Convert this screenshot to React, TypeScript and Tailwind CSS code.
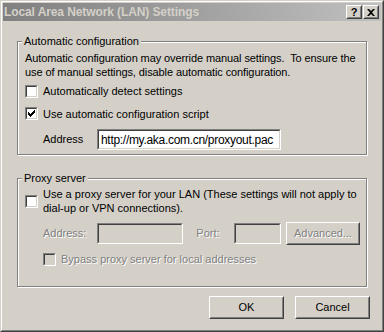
import React from "react";

const font = { fontFamily: '"Liberation Sans", Arial, sans-serif' };

function Checkbox({ checked = false, disabled = false }: { checked?: boolean; disabled?: boolean }) {
  return (
    <div className="w-[13px] h-[13px] shrink-0 border border-t-[#808080] border-l-[#808080] border-b-white border-r-white">
      <div
        className={`w-full h-full border border-t-[#404040] border-l-[#404040] border-b-[#d4d0c8] border-r-[#d4d0c8] ${disabled ? "bg-[#d4d0c8]" : "bg-white"} flex items-center justify-center`}
      >
        {checked && (
          <svg width="7" height="7" viewBox="0 0 7 7">
            <path d="M0 2h1v1h1v1h1v-1h1v-1h1v-1h1v-1h1v3h-1v1h-1v1h-1v1h-1v1h-1v-1h-1v-1h-1z" fill="#000" />
          </svg>
        )}
      </div>
    </div>
  );
}

function Field({ w, value, disabled = false }: { w: string; value?: string; disabled?: boolean }) {
  return (
    <div className={`${w} h-[21px] border border-t-[#808080] border-l-[#808080] border-b-white border-r-white`}>
      <div
        className={`w-full h-full border border-t-[#404040] border-l-[#404040] border-b-[#d4d0c8] border-r-[#d4d0c8] ${disabled ? "bg-[#d4d0c8]" : "bg-white"} flex items-center pl-[2px] text-[12px] tracking-[-0.3px] text-black`}
      >
        {value}
      </div>
    </div>
  );
}

function Button({ label, w, disabled = false }: { label: string; w: string; disabled?: boolean }) {
  return (
    <div className={`${w} h-[23px] border border-t-white border-l-white border-b-[#404040] border-r-[#404040]`}>
      <div className="w-full h-full border border-t-[#d4d0c8] border-l-[#d4d0c8] border-b-[#808080] border-r-[#808080] flex items-center justify-center">
        <span className={disabled ? "text-[#808080] [text-shadow:1px_1px_0_#fff]" : "text-black"}>{label}</span>
      </div>
    </div>
  );
}

function Group({ title, className, children }: { title: string; className: string; children: React.ReactNode }) {
  return (
    <div className={`relative border border-[#808080] shadow-[inset_1px_1px_0_#fff,1px_1px_0_#fff] ${className}`}>
      <span className="absolute left-[4px] top-[-8px] bg-[#d4d0c8] px-[2px] leading-[14px]">{title}</span>
      {children}
    </div>
  );
}

export default function App() {
  return (
    <div style={font} className="w-[384px] h-[332px] bg-[#d4d0c8] text-[11px] text-black border border-t-[#d4d0c8] border-l-[#d4d0c8] border-b-[#404040] border-r-[#404040]">
      <div className="w-full h-full border border-t-white border-l-white border-b-[#808080] border-r-[#808080] p-[1px] flex flex-col">
        <div className="h-[18px] bg-gradient-to-r from-[#808080] to-[#c0c0c0] flex items-center justify-between pl-[1px] pr-[2px]">
          <span className="font-bold text-[12px] tracking-[-0.1px] text-[#d4d0c8]">Local Area Network (LAN) Settings</span>
          <div className="flex gap-[1px]">
            {["?", "X"].map((c) => (
              <div key={c} className="w-[16px] h-[14px] border border-t-white border-l-white border-b-[#404040] border-r-[#404040]">
                <div className="w-full h-full border border-t-[#d4d0c8] border-l-[#d4d0c8] border-b-[#808080] border-r-[#808080] bg-[#d4d0c8] flex items-center justify-center font-bold text-[11px] leading-none">
                  {c === "?" ? "?" : (
                    <svg width="8" height="7" viewBox="0 0 8 7"><path d="M0 0h2l2 2 2-2h2L5 3.5 8 7H6L4 5 2 7H0l3-3.5z" fill="#000" /></svg>
                  )}
                </div>
              </div>
            ))}
          </div>
        </div>

        <div className="flex flex-col px-[14px] pt-[20px]">
          <Group title="Automatic configuration" className="h-[114px] pl-[7px] pr-[4px] pt-[9px]">
            <p className="leading-[14px] tracking-[-0.1px]">
              Automatic configuration may override manual settings.&nbsp; To ensure the use of manual settings, disable automatic configuration.
            </p>
            <div className="flex items-center gap-[5px] mt-[4px]">
              <Checkbox />
              <span>Automatically detect settings</span>
            </div>
            <div className="flex items-center gap-[5px] mt-[6px]">
              <Checkbox checked />
              <span>Use automatic configuration script</span>
            </div>
            <div className="flex items-center mt-[7px] pl-[18px]">
              <span className="w-[54px]">Address</span>
              <Field w="w-[184px]" value="http://my.aka.com.cn/proxyout.pac" />
            </div>
          </Group>

          <Group title="Proxy server" className="h-[109px] mt-[23px] pl-[7px] pr-[6px] pt-[8px]">
            <div className="flex items-start gap-[5px]">
              <div className="pt-[8px]"><Checkbox /></div>
              <p className="leading-[14px]">
                Use a proxy server for your LAN (These settings will not apply to dial-up or VPN connections).
              </p>
            </div>
            <div className="flex items-center mt-[7px] pl-[18px] text-[#808080] [text-shadow:1px_1px_0_#fff]">
              <span className="w-[54px]">Address:</span>
              <Field w="w-[87px]" disabled />
              <span className="ml-[13px] w-[38px]">Port:</span>
              <Field w="w-[47px]" disabled />
              <div className="ml-[5px]"><Button label="Advanced..." w="w-[74px]" disabled /></div>
            </div>
            <div className="flex items-center gap-[5px] mt-[6px] pl-[18px] text-[#808080]">
              <Checkbox disabled />
              <span className="[text-shadow:1px_1px_0_#fff]">Bypass proxy server for local addresses</span>
            </div>
          </Group>

          <div className="flex justify-end gap-[11px] mt-[9px] mr-[-3px]">
            <Button label="OK" w="w-[75px]" />
            <Button label="Cancel" w="w-[75px]" />
          </div>
        </div>
      </div>
    </div>
  );
}
